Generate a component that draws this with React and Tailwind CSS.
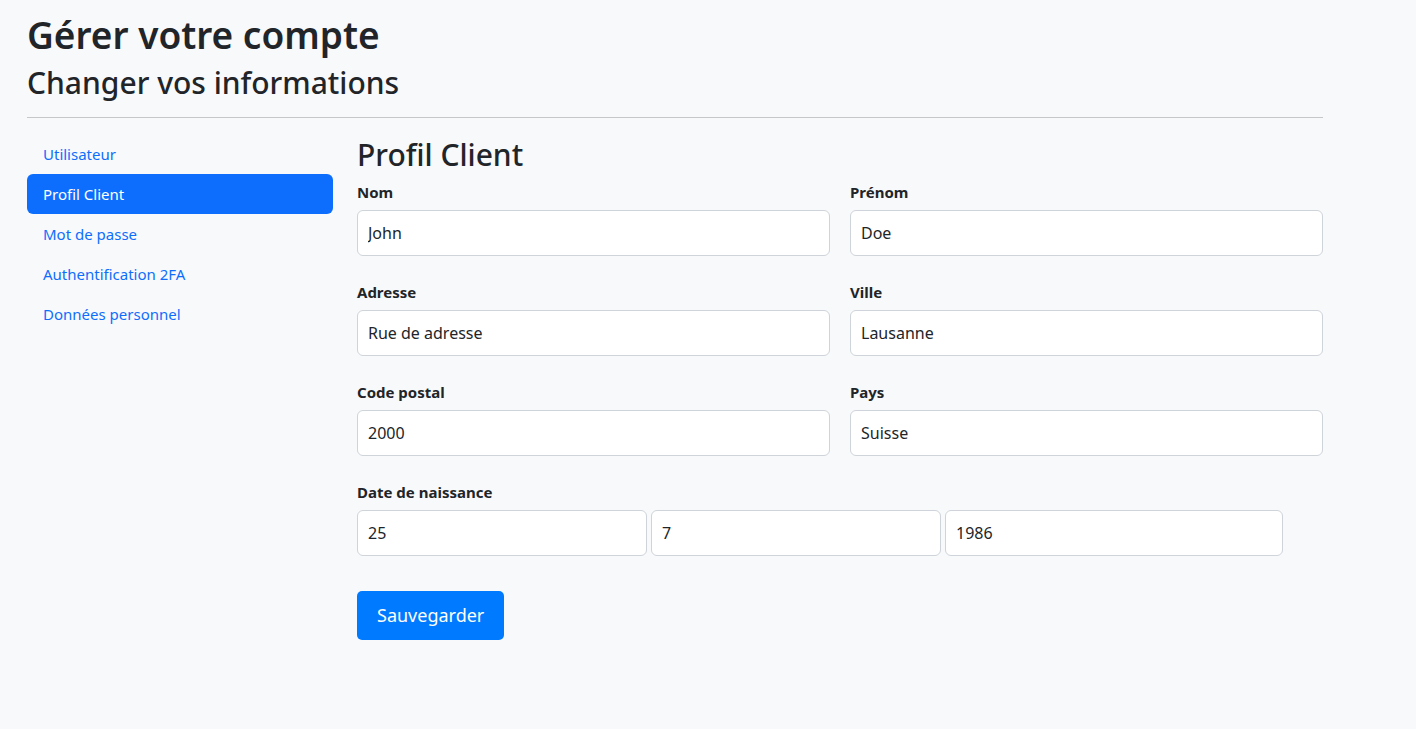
import { useState } from "react";

const navItems = [
  "Utilisateur",
  "Profil Client",
  "Mot de passe",
  "Authentification 2FA",
  "Données personnel",
];

function Field({ label, value }) {
  return (
    <div className="flex flex-col">
      <label className="text-[15px] font-bold leading-[24px] mb-[6px] text-[#212529]">
        {label}
      </label>
      <input
        defaultValue={value}
        className="h-[46px] w-full bg-white border border-[#ced4da] rounded-[6px] px-[10px] text-[16px] text-[#212529] outline-none"
      />
    </div>
  );
}

export default function App() {
  const [active, setActive] = useState("Profil Client");

  return (
    <div
      className="min-h-screen bg-[#f8f9fa] text-[#212529]"
      style={{ fontFamily: '"Noto Sans", "Open Sans", sans-serif' }}
    >
      <div className="w-[1296px] ml-[27px]">
        {/* HEADER */}
        <h1 className="text-[37px] font-[580] leading-[1.2] pt-[13px]">
          Gérer votre compte
        </h1>
        <h2 className="text-[30px] font-medium leading-[1.2] mt-[8px]">
          Changer vos informations
        </h2>
        <hr className="mt-[16px] border-0 border-t border-[#c6c7c8]" />

        <div className="flex gap-6 mt-[16px]">
          {/* SIDE NAV */}
          <nav className="w-[306px] flex flex-col">
            {navItems.map((item) => (
              <button
                key={item}
                onClick={() => setActive(item)}
                className={`h-[40px] px-4 text-left text-[15px] rounded-[6px] ${
                  active === item
                    ? "bg-[#0d6efd] text-white"
                    : "text-[#0d6efd]"
                }`}
              >
                {item}
              </button>
            ))}
          </nav>

          {/* FORM */}
          <div className="w-[966px]">
            <h2 className="text-[30px] font-medium leading-[1.2] mt-[3px] mb-[7px]">
              Profil Client
            </h2>

            <div className="grid grid-cols-2 gap-x-[20px] gap-y-[24px]">
              <Field label="Nom" value="John" />
              <Field label="Prénom" value="Doe" />
              <Field label="Adresse" value="Rue de adresse" />
              <Field label="Ville" value="Lausanne" />
              <Field label="Code postal" value="2000" />
              <Field label="Pays" value="Suisse" />
            </div>

            <div className="mt-[24px]">
              <label className="block text-[15px] font-bold leading-[24px] mb-[6px]">
                Date de naissance
              </label>
              <div className="flex gap-[4px]">
                {[
                  ["25", "w-[290px]"],
                  ["7", "w-[290px]"],
                  ["1986", "w-[338px]"],
                ].map(([v, w]) => (
                  <input
                    key={v}
                    defaultValue={v}
                    className={`${w} h-[46px] bg-white border border-[#ced4da] rounded-[6px] px-[10px] text-[16px] outline-none`}
                  />
                ))}
              </div>
            </div>

            <button className="mt-[35px] h-[49px] px-[20px] bg-[#007bff] text-white text-[18px] rounded-[5px]">
              Sauvegarder
            </button>
          </div>
        </div>
      </div>
    </div>
  );
}
